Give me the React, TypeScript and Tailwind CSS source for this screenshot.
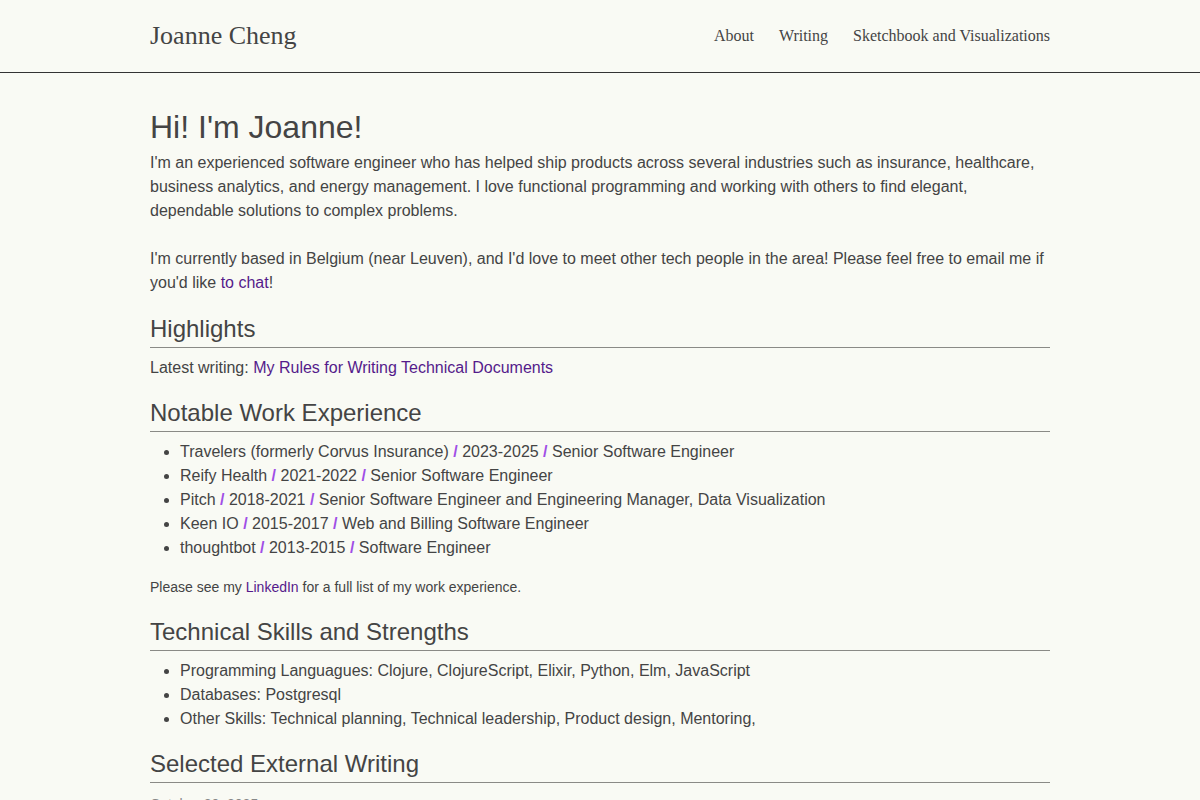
const work = [
  ["Travelers (formerly Corvus Insurance)", "2023-2025", "Senior Software Engineer"],
  ["Reify Health", "2021-2022", "Senior Software Engineer"],
  ["Pitch", "2018-2021", "Senior Software Engineer and Engineering Manager, Data Visualization"],
  ["Keen IO", "2015-2017", "Web and Billing Software Engineer"],
  ["thoughtbot", "2013-2015", "Software Engineer"],
];

const skills = [
  "Programming Languagues: Clojure, ClojureScript, Elixir, Python, Elm, JavaScript",
  "Databases: Postgresql",
  "Other Skills: Technical planning, Technical leadership, Product design, Mentoring,",
];

function Slash() {
  return <span className="font-bold text-[#a04ee6]"> / </span>;
}

function SectionTitle({ children, className = "mt-[17px]" }: { children: React.ReactNode; className?: string }) {
  return (
    <h2 className={`${className} mb-[8px] border-b border-[#8a8a86] pb-[2px] text-[24px] leading-[32px]`}>
      {children}
    </h2>
  );
}

export default function App() {
  return (
    <div className="min-h-screen bg-[#f9faf4] text-[#444] font-['Liberation_Sans',Arial,sans-serif]">
      <header className="border-b border-[#333]">
        <div className="mx-auto flex h-[72px] w-[900px] items-center justify-between font-['Liberation_Serif','Times_New_Roman',serif]">
          <a className="text-[26px] leading-none text-[#444]">Joanne Cheng</a>
          <nav className="flex items-center gap-[25px] text-[16px]">
            <a>About</a>
            <a>Writing</a>
            <a>Sketchbook and Visualizations</a>
          </nav>
        </div>
      </header>

      <main className="mx-auto w-[900px] pt-[34px] text-[16px] leading-[24px]">
        <h1 className="text-[32px] leading-[40px]">Hi! I'm Joanne!</h1>
        <p className="mt-[4px]">
          I'm an experienced software engineer who has helped ship products across several industries such as
          insurance, healthcare, business analytics, and energy management. I love functional programming and
          working with others to find elegant, dependable solutions to complex problems.
        </p>
        <p className="mt-[24px]">
          I'm currently based in Belgium (near Leuven), and I'd love to meet other tech people in the area! Please
          feel free to email me if you'd like <a className="text-[#551a8b]">to chat</a>!
        </p>

        <SectionTitle className="mt-[18px]">Highlights</SectionTitle>
        <p>
          Latest writing: <a className="text-[#551a8b]">My Rules for Writing Technical Documents</a>
        </p>

        <SectionTitle>Notable Work Experience</SectionTitle>
        <ul className="list-disc pl-[30px]">
          {work.map(([company, years, role]) => (
            <li key={company}>
              {company}
              <Slash />
              {years}
              <Slash />
              {role}
            </li>
          ))}
        </ul>
        <p className="mt-[17px] text-[14px] leading-[20px]">
          Please see my <a className="text-[#551a8b]">LinkedIn</a> for a full list of my work experience.
        </p>

        <SectionTitle className="mt-[19px]">Technical Skills and Strengths</SectionTitle>
        <ul className="list-disc pl-[30px]">
          {skills.map((s) => (
            <li key={s}>{s}</li>
          ))}
        </ul>

        <SectionTitle>Selected External Writing</SectionTitle>
        <p className="pt-[3px] text-[14px] leading-[20px] text-[#888]">October 20, 2025</p>
        <div className="h-[200px]" />
      </main>
    </div>
  );
}
